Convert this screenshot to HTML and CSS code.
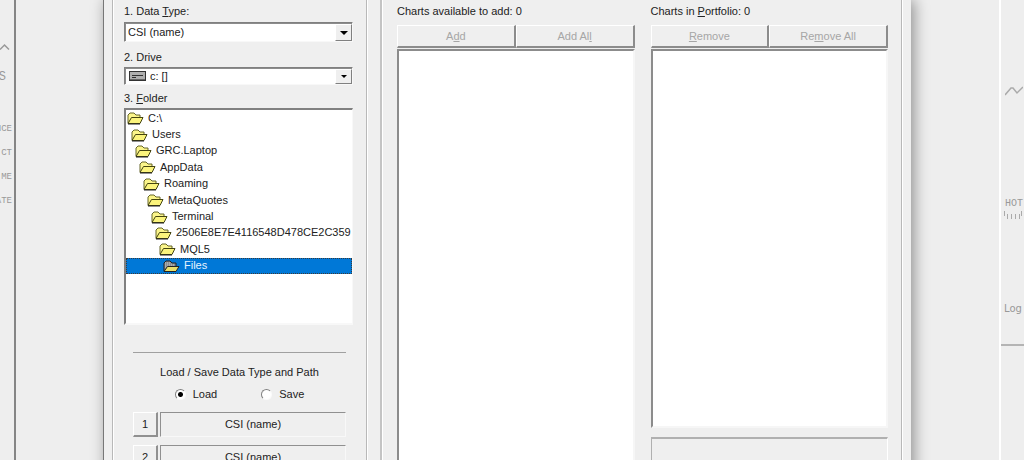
FILE: index.html
```
<!DOCTYPE html>
<html lang="en">
<head>
    <meta charset="UTF-8">
    <meta name="viewport" content="width=device-width, initial-scale=1.0">
    <title>Chart Portfolio</title>
    <link rel="stylesheet" href="styles.css">
</head>
<body>
    <svg class="symbols" aria-hidden="true">
        <symbol id="folder" viewBox="0 0 17 14">
            <path d="M1 12V4l2-2h4l2 2h4v3" fill="#fbf58a" stroke="#66662a"/>
            <path d="M1 12.500L4.500 6.500H16L13 12.500Z" fill="#fbf47c" stroke="#44440f"/>
            <path d="M1 13h12" fill="none" stroke="#222"/>
        </symbol>
        <symbol id="folder-open" viewBox="0 0 17 14">
            <path d="M1 12V4l2-2h4l2 2h4v3" fill="#8a8f94" stroke="#222"/>
            <path d="M2 4h6M2 6h10M2 8h2" fill="none" stroke="#c8c8c8" stroke-dasharray="1 1"/>
            <path d="M1 12.500L4.500 7.500H16L13 12.500Z" fill="#e9df6a" stroke="#222"/>
        </symbol>
    </svg>

    <div class="desktop">
        <aside class="toolbar toolbar-left">
            <svg class="chevron" viewBox="0 0 10 8"><path d="M0 6.500L4.500 2L9 6.500" fill="none" stroke="#999" stroke-width="1.500"/></svg>
            <span class="tool-big">S</span>
            <span class="tool">NCE</span>
            <span class="tool">CT</span>
            <span class="tool">ME</span>
            <span class="tool">ATE</span>
        </aside>

        <main class="dialog">
            <form class="panel source">
                <label for="data_type">1. Data <u>T</u>ype:</label>
                <div class="combo">
                    <select id="data_type">
                        <option>CSI (name)</option>
                    </select>
                    <span class="arrow"></span>
                </div>

                <label for="drive">2. Drive</label>
                <div class="combo combo-drive">
                    <select id="drive">
                        <option>c: []</option>
                    </select>
                    <svg class="drive-icon" viewBox="0 0 17 10">
                        <rect x="0.500" y="0.500" width="16" height="9" fill="#b0b0b0" stroke="#333"/>
                        <path d="M1 8.500h15" stroke="#666"/>
                        <path d="M3 4.500h11M3 6.500h4" stroke="#333"/>
                    </svg>
                    <span class="arrow"></span>
                </div>

                <label id="folder_label">3. <u>F</u>older</label>
                <div class="folders">
                    <ul class="tree" role="listbox" aria-labelledby="folder_label">
                        <li role="option"><svg><use href="#folder"/></svg>C:\</li>
                        <li role="option"><svg><use href="#folder"/></svg>Users</li>
                        <li role="option"><svg><use href="#folder"/></svg>GRC.Laptop</li>
                        <li role="option"><svg><use href="#folder"/></svg>AppData</li>
                        <li role="option"><svg><use href="#folder"/></svg>Roaming</li>
                        <li role="option"><svg><use href="#folder"/></svg>MetaQuotes</li>
                        <li role="option"><svg><use href="#folder"/></svg>Terminal</li>
                        <li role="option"><svg><use href="#folder"/></svg>2506E8E7E4116548D478CE2C359</li>
                        <li role="option"><svg><use href="#folder"/></svg>MQL5</li>
                        <li role="option" class="selected" aria-selected="true"><svg><use href="#folder-open"/></svg>Files</li>
                    </ul>
                </div>

                <fieldset class="presets">
                    <legend>Load / Save Data Type and Path</legend>
                    <div class="modes">
                        <label><input type="radio" name="mode" value="load" checked>Load</label>
                        <label><input type="radio" name="mode" value="save">Save</label>
                    </div>
                    <div class="preset">
                        <button type="button">1</button>
                        <output>CSI (name)</output>
                    </div>
                    <div class="preset">
                        <button type="button">2</button>
                        <output>CSI (name)</output>
                    </div>
                </fieldset>
            </form>

            <div class="panel charts">
                <section class="column">
                    <h2>Charts available to add: 0</h2>
                    <div class="buttons">
                        <button type="button" disabled>A<u>d</u>d</button>
                        <button type="button" disabled>Add Al<u>l</u></button>
                    </div>
                    <div class="list list-tall"></div>
                </section>
                <section class="column">
                    <h2>Charts in <u>P</u>ortfolio: 0</h2>
                    <div class="buttons">
                        <button type="button" disabled><u>R</u>emove</button>
                        <button type="button" disabled>Re<u>m</u>ove All</button>
                    </div>
                    <div class="list"></div>
                    <div class="status"></div>
                </section>
            </div>
        </main>

        <aside class="toolbar toolbar-right">
            <svg class="zigzag" viewBox="0 0 18 10"><path d="M0 9L6 2L8 2L12 7L18 1" fill="none" stroke="#aaa" stroke-width="1.500"/></svg>
            <span class="hot">HOT</span>
            <svg class="ticks" viewBox="0 0 18 9"><path d="M.5 0v5M3.500 3v5M7.500 3v5M11.500 3v5M15.500 3v5M17.500 0v5" fill="none" stroke="#aaa"/></svg>
            <span class="log">Log</span>
        </aside>
    </div>
</body>
</html>
```
FILE: styles.css
```
* {
    box-sizing: border-box;
}

body {
    margin: 0;
    height: 100vh;
    overflow: hidden;
    background-color: #eeeeee;
    color: #222222;
    font-family: "Liberation Sans", Arial, sans-serif;
    font-size: 11px;
    line-height: 15px;
}

button,
select,
output {
    font: inherit;
    color: inherit;
}

.symbols {
    display: none;
}

.desktop {
    display: flex;
    min-height: 100vh;
}

/* side toolbars */
.toolbar {
    display: flex;
    flex-direction: column;
    flex-shrink: 0;
    overflow: hidden;
    color: #999999;
    font-family: "Liberation Mono", monospace;
    font-size: 9px;
}

.toolbar-left {
    width: 16px;
    align-items: flex-end;
    padding: 43px 2px 0 0;
    border-right: 2px solid #858585;
}

.toolbar-right {
    width: 25px;
    padding-top: 86px;
    border-left: 2px solid #ffffff;
}

.chevron {
    width: 10px;
    height: 8px;
    margin-right: 2px;
}

.tool-big {
    margin: 19px 6px 37px 0;
    font-size: 12px;
}

.tool {
    height: 24px;
}

.zigzag {
    width: 18px;
    height: 10px;
    margin-left: 4px;
}

.hot {
    height: 15px;
    margin: 100px 0 0 4px;
    font-size: 10px;
}

.ticks {
    width: 18px;
    height: 9px;
    margin-left: 3px;
}

.log {
    padding: 81px 0 28px 3px;
    font-size: 10px;
    font-family: "DejaVu Sans", sans-serif;
    border-bottom: 2px solid #b4b4b4;
}

/* dialog window */
.dialog {
    flex: 1;
    display: flex;
    gap: 13px;
    margin: 0 88px 0 87px;
    padding: 0 9px 0 8px;
    border-left: 1px solid #777777;
    background-color: #efefef;
    box-shadow: 3px 0 14px rgba(0, 0, 0, 0.4);
}

.panel {
    border: solid #b8b8b8;
    border-width: 0 1px;
    box-shadow: inset 1px 0 #ffffff, 1px 0 #ffffff;
}

.source {
    display: flex;
    flex-direction: column;
    flex: 0 0 255px;
    padding: 4px 13px 0 11px;
}

.combo {
    display: grid;
    position: relative;
    height: 20px;
    margin: 3px 0 8px;
    background-color: #ffffff;
    border: 1px solid;
    border-color: #808080 #f8f8f8 #f8f8f8 #808080;
    box-shadow: inset 1px 1px #8c8c8c;
}

.combo-drive {
    height: 18px;
    margin: 2px 0 6px;
}

.combo select {
    appearance: none;
    border: none;
    padding: 0 20px 0 3px;
    background: transparent;
    outline: none;
}

.combo-drive select {
    padding-left: 25px;
}

.drive-icon {
    position: absolute;
    left: 4px;
    top: 3px;
    width: 17px;
    height: 10px;
    pointer-events: none;
}

.arrow {
    position: absolute;
    top: 1px;
    right: 0;
    bottom: 0;
    width: 17px;
    display: grid;
    place-items: center;
    background-color: #efefef;
    border: 1px solid;
    border-color: #ffffff #808080 #808080 #ffffff;
    pointer-events: none;
}

.arrow::after {
    content: "";
    border: solid transparent;
    border-width: 4px 4px 0;
    border-top-color: #000000;
}

.combo-drive .arrow::after {
    border-width: 3px 3px 0;
}

.folders {
    height: 217px;
    margin-top: 2px;
    overflow: hidden;
    background-color: #ffffff;
    border: 2px solid;
    border-color: #808080 #f8f8f8 #f8f8f8 #808080;
    border-right-width: 1px;
}

.tree {
    display: grid;
    grid-auto-rows: 1fr;
    height: 164px;
    margin: 0;
    padding: 0;
    list-style: none;
}

.tree li {
    display: flex;
    align-items: center;
    gap: 4px;
    white-space: nowrap;
}

.tree svg {
    flex-shrink: 0;
    width: 17px;
    height: 14px;
}

.tree li:nth-child(1) { padding-left: 1px; }
.tree li:nth-child(2) { padding-left: 5px; }
.tree li:nth-child(3) { padding-left: 9px; }
.tree li:nth-child(4) { padding-left: 13px; }
.tree li:nth-child(5) { padding-left: 17px; }
.tree li:nth-child(6) { padding-left: 21px; }
.tree li:nth-child(7) { padding-left: 25px; }
.tree li:nth-child(8) { padding-left: 29px; }
.tree li:nth-child(9) { padding-left: 33px; }
.tree li:nth-child(10) { padding-left: 37px; }

.tree .selected {
    background-color: #0078d7;
    color: #e8f4ff;
    outline: 1px dotted #3a3a3a;
    outline-offset: -1px;
}

.presets {
    display: flex;
    flex-direction: column;
    margin: 27px 7px 0 9px;
    padding: 0;
    border: none;
    border-top: 1px solid #a0a0a0;
    min-width: 0;
}

.presets legend {
    float: left;
    width: 100%;
    padding: 12px 0 7px;
    text-align: center;
}

.modes {
    display: flex;
    justify-content: center;
    gap: 44px;
    margin-bottom: 10px;
}

.modes label {
    display: flex;
    align-items: center;
    gap: 7px;
}

.modes input {
    appearance: none;
    width: 11px;
    height: 11px;
    margin: 0;
    border: 1px solid;
    border-color: #808080 #fafafa #fafafa #808080;
    border-radius: 50%;
    background-color: #ffffff;
}

.modes input:checked {
    background-image: radial-gradient(circle, #000000 2px, transparent 3px);
}

.preset {
    display: flex;
    gap: 2px;
    margin-bottom: 8px;
}

.preset button {
    width: 25px;
    height: 25px;
    padding: 0;
    background-color: #efefef;
    border: solid;
    border-width: 1px 2px 2px 1px;
    border-color: #ffffff #909090 #909090 #ffffff;
}

.preset output {
    flex: 1;
    padding: 4px 0;
    text-align: center;
    border: 1px solid;
    border-color: #909090 #f8f8f8 #f8f8f8 #909090;
}

/* chart lists */
.charts {
    flex: 1;
    display: flex;
    gap: 16px;
    padding: 4px 13px 0 15px;
    border-left: 2px solid #c4c4c4;
}

.column {
    flex: 1;
    display: flex;
    flex-direction: column;
}

.column h2 {
    margin: 0 0 6px;
    font-size: 11px;
    font-weight: normal;
}

.buttons {
    display: flex;
}

.buttons button {
    flex: 1;
    height: 23px;
    padding: 0;
    background-color: #efefef;
    color: #a6a6a6;
    border: solid;
    border-width: 1px 2px 2px 1px;
    border-color: #ffffff #8c8c8c #8c8c8c #ffffff;
}

.list {
    height: 379px;
    margin-top: 1px;
    background-color: #ffffff;
    border: 2px solid;
    border-color: #8c8c8c #f6f6f6 #f6f6f6 #8c8c8c;
}

.list-tall {
    flex: 1;
}

.status {
    height: 40px;
    margin-top: 9px;
    border: solid;
    border-width: 2px 1px 1px 1px;
    border-color: #b0b0b0 #ffffff #ffffff #b0b0b0;
}
```
